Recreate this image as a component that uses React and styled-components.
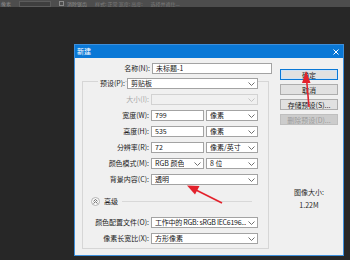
import React from "react";
import styled, { createGlobalStyle } from "styled-components";

const Global = createGlobalStyle`
  html, body { margin: 0; padding: 0; background: #272727; }
  body { font-family: "Noto Sans CJK SC", "Noto Sans", sans-serif; }
`;

const Page = styled.div`
  position: relative;
  width: 350px;
  height: 260px;
  overflow: hidden;
  background: #272727;
`;

const OptionsBar = styled.div`
  height: 7px;
  background: #4d4d4d;
  display: flex;
  align-items: center;
  gap: 8px;
  padding-left: 1px;
  overflow: hidden;
`;

const ToolText = styled.span`
  font-size: 5px;
  line-height: 6px;
  color: ${(p) => p.$tone || "#8e8e8e"};
  white-space: nowrap;
`;

const ToolInput = styled.span`
  width: ${(p) => p.$w}px;
  height: 6px;
  box-sizing: border-box;
  background: #3f3f3f;
  border: 1px solid #5c5c5c;
`;

const ToolCheck = styled.span`
  width: 5px;
  height: 5px;
  box-sizing: border-box;
  border: 1px solid #8a8a8a;
  margin-right: -5px;
`;

const Dialog = styled.div`
  margin: 37px 0 0 74px;
  width: 270px;
  box-sizing: border-box;
  border: 1px solid #3d8fdb;
  background: #f0f0f0;
`;

const TitleBar = styled.div`
  height: 13px;
  background: #0a78d6;
  display: flex;
  align-items: center;
  justify-content: space-between;
  padding: 0 4px 0 2px;
  color: #fff;
  font-size: 7px;
  line-height: 13px;
`;

const Body = styled.div`
  display: flex;
  padding: 5px 0 6px 0;
`;

const LeftPane = styled.div`
  width: 197px;
  display: flex;
  flex-direction: column;
`;

const NameRow = styled.div`
  display: grid;
  grid-template-columns: 75px 120px;
  column-gap: 2px;
  height: 11px;
`;

const Label = styled.div`
  font-size: 7px;
  line-height: 11px;
  text-align: right;
  white-space: nowrap;
  color: ${(p) => (p.$disabled ? "#a9a9a9" : "#1c1c1c")};

  span {
    background: #f0f0f0;
    padding-left: 2px;
  }
`;

const GroupBox = styled.div`
  margin: 7px 0 0 7px;
  width: 187px;
  box-sizing: border-box;
  border: 1px solid #d6d6d6;
  padding-bottom: 4px;
  display: flex;
  flex-direction: column;
  gap: 5px;
`;

const PresetRow = styled.div`
  margin-top: -4px;
  display: grid;
  grid-template-columns: 42px 131px;
  column-gap: 2px;
  height: 11px;
`;

const FieldRow = styled.div`
  display: grid;
  grid-template-columns: 66px 53px 52px;
  column-gap: 2px;
  height: 11px;
  margin-top: ${(p) => p.$gapTop || 0}px;
`;

const Field = styled.div`
  box-sizing: border-box;
  height: 11px;
  display: flex;
  align-items: center;
  justify-content: space-between;
  gap: 1px;
  padding: 0 2px 0 3px;
  background: ${(p) => (p.$disabled ? "#f0f0f0" : "#ffffff")};
  border: 1px solid ${(p) => (p.$disabled ? "#d2d2d2" : "#a3a3a3")};
  font-size: 7px;
  line-height: 9px;
  color: #161616;
  white-space: nowrap;
  overflow: hidden;
  grid-column: ${(p) => (p.$span ? "2 / span 2" : "auto")};
`;

const FieldText = styled.span`
  overflow: hidden;
  letter-spacing: ${(p) => (p.$tight ? "-0.25px" : "normal")};
`;

const ChevronSvg = styled.svg`
  flex: none;
  width: 7px;
  height: 4px;
`;

const Chevron = ({ light }) => (
  <ChevronSvg viewBox="0 0 7 4">
    <path d="M0.5 0.5 L3.5 3.5 L6.5 0.5" fill="none" stroke={light ? "#c4c4c4" : "#707070"} strokeWidth="1" />
  </ChevronSvg>
);

const Select = ({ children, span, disabled, tight }) => (
  <Field $span={span} $disabled={disabled}>
    <FieldText $tight={tight}>{children}</FieldText>
    <Chevron light={disabled} />
  </Field>
);

const AdvancedRow = styled.div`
  margin-top: 5px;
  height: 12px;
  display: flex;
  align-items: center;
  padding-left: 8px;
  font-size: 7px;
  color: #1c1c1c;
`;

const ToggleCircle = styled.span`
  width: 9px;
  height: 9px;
  box-sizing: border-box;
  border-radius: 50%;
  border: 1px solid #b4b4b4;
  background: #fbfbfb;
  display: flex;
  align-items: center;
  justify-content: center;
  margin-right: 4px;
`;

const Rule = styled.span`
  flex: 1;
  height: 1px;
  background: #d8d8d8;
  margin: 0 16px 0 4px;
`;

const RightPane = styled.div`
  flex: 1;
  display: flex;
  flex-direction: column;
  padding: 6px 0 0 8px;
`;

const ButtonStack = styled.div`
  display: flex;
  flex-direction: column;
  gap: 4px;
  width: 58px;
`;

const Button = styled.div`
  box-sizing: border-box;
  height: 11px;
  display: flex;
  align-items: center;
  justify-content: center;
  font-size: 7px;
  white-space: nowrap;
  background: ${(p) => (p.$disabled ? "#cccccc" : "#e1e1e1")};
  color: ${(p) => (p.$disabled ? "#9b9b9b" : "#1c1c1c")};
  border: 1px solid ${(p) => (p.$primary ? "#0a78d6" : p.$disabled ? "#bfbfbf" : "#adadad")};
  box-shadow: ${(p) => (p.$primary ? "inset 0 0 0 1px #cfe3f6" : "none")};
`;

const ImageInfo = styled.div`
  margin-top: 61px;
  width: 58px;
  text-align: center;
  font-size: 7px;
  line-height: 13px;
  color: #2a2a2a;
`;

const Overlay = styled.svg`
  position: absolute;
  left: 0;
  top: 0;
  width: 350px;
  height: 260px;
  pointer-events: none;
`;

export default function App() {
  return (
    <Page>
      <Global />
      <OptionsBar>
        <ToolText>像素</ToolText>
        <ToolInput $w={32} />
        <ToolCheck />
        <ToolText>消除锯齿</ToolText>
        <ToolText $tone="#7a7a7a">样式: 正常 宽度: 高度:</ToolText>
        <ToolText $tone="#7a7a7a">选择并遮住...</ToolText>
      </OptionsBar>

      <Dialog>
        <TitleBar>
          <span>新建</span>
          <svg width="6" height="6" viewBox="0 0 6 6">
            <path d="M0.5 0.5 L5.5 5.5 M5.5 0.5 L0.5 5.5" stroke="#ffffff" strokeWidth="1" />
          </svg>
        </TitleBar>
        <Body>
          <LeftPane>
            <NameRow>
              <Label>名称(N):</Label>
              <Field>
                <FieldText>未标题-1</FieldText>
              </Field>
            </NameRow>
            <GroupBox>
              <PresetRow>
                <Label>
                  <span>预设(P):</span>
                </Label>
                <Select>剪贴板</Select>
              </PresetRow>
              <FieldRow>
                <Label $disabled>大小(I):</Label>
                <Select span disabled>{""}</Select>
              </FieldRow>
              <FieldRow>
                <Label>宽度(W):</Label>
                <Field>
                  <FieldText>799</FieldText>
                </Field>
                <Select>像素</Select>
              </FieldRow>
              <FieldRow>
                <Label>高度(H):</Label>
                <Field>
                  <FieldText>535</FieldText>
                </Field>
                <Select>像素</Select>
              </FieldRow>
              <FieldRow>
                <Label>分辨率(R):</Label>
                <Field>
                  <FieldText>72</FieldText>
                </Field>
                <Select>像素/英寸</Select>
              </FieldRow>
              <FieldRow>
                <Label>颜色模式(M):</Label>
                <Select>RGB 颜色</Select>
                <Select>8 位</Select>
              </FieldRow>
              <FieldRow>
                <Label>背景内容(C):</Label>
                <Select span>透明</Select>
              </FieldRow>
              <AdvancedRow>
                <ToggleCircle>
                  <svg width="5" height="5" viewBox="0 0 5 5">
                    <path d="M0.5 2.3 L2.5 0.5 L4.5 2.3 M0.5 4.5 L2.5 2.7 L4.5 4.5" fill="none" stroke="#555" strokeWidth="0.9" />
                  </svg>
                </ToggleCircle>
                高级
                <Rule />
              </AdvancedRow>
              <FieldRow $gapTop={5}>
                <Label>颜色配置文件(O):</Label>
                <Select span tight>工作中的 RGB: sRGB IEC6196...</Select>
              </FieldRow>
              <FieldRow>
                <Label>像素长宽比(X):</Label>
                <Select span>方形像素</Select>
              </FieldRow>
            </GroupBox>
          </LeftPane>
          <RightPane>
            <ButtonStack>
              <Button $primary>确定</Button>
              <Button>取消</Button>
              <Button>存储预设(S)...</Button>
              <Button $disabled>删除预设(D)...</Button>
            </ButtonStack>
            <ImageInfo>
              图像大小:
              <br />
              1.22M
            </ImageInfo>
          </RightPane>
        </Body>
      </Dialog>

      <Overlay viewBox="0 0 350 260">
        <line x1="309" y1="107" x2="306.8" y2="82" stroke="#e3222c" strokeWidth="1.6" />
        <polygon points="306,71 302,83 310.5,83" fill="#e3222c" />
        <line x1="222" y1="203" x2="196" y2="190" stroke="#e3222c" strokeWidth="1.6" />
        <polygon points="187,185.5 199.5,186 195,194.5" fill="#e3222c" />
      </Overlay>
    </Page>
  );
}
